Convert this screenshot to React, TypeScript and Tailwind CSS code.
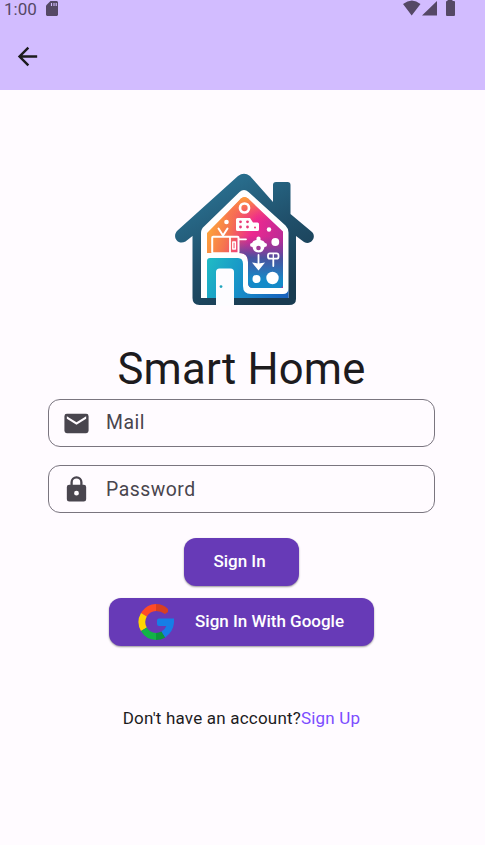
function HouseLogo() {
  return (
    <svg width="150" height="142" viewBox="170 168 150 142" fill="none" aria-label="Smart Home logo">
      <defs>
        <linearGradient id="navy" x1="200" y1="180" x2="265" y2="300" gradientUnits="userSpaceOnUse">
          <stop stopColor="#2b7596" />
          <stop offset=".55" stopColor="#20506b" />
          <stop offset="1" stopColor="#193b51" />
        </linearGradient>
        <linearGradient id="warm" x1="208" y1="218" x2="284" y2="243" gradientUnits="userSpaceOnUse">
          <stop stopColor="#ffad38" />
          <stop offset=".3" stopColor="#f5744f" />
          <stop offset=".58" stopColor="#ed2890" />
          <stop offset="1" stopColor="#b72c96" />
        </linearGradient>
        <linearGradient id="peak" x1="244" y1="195" x2="244" y2="222" gradientUnits="userSpaceOnUse">
          <stop stopColor="#ffb02f" />
          <stop offset="1" stopColor="#f83d72" stopOpacity="0" />
        </linearGradient>
        <linearGradient id="cool" x1="262" y1="236" x2="260" y2="280" gradientUnits="userSpaceOnUse">
          <stop stopColor="#7838a1" stopOpacity="0" />
          <stop offset=".5" stopColor="#49539f" />
          <stop offset="1" stopColor="#148ac8" />
        </linearGradient>
        <linearGradient id="teal" x1="207" y1="260" x2="288" y2="297" gradientUnits="userSpaceOnUse">
          <stop stopColor="#20bbc5" />
          <stop offset=".5" stopColor="#168bc8" />
          <stop offset="1" stopColor="#1760bd" />
        </linearGradient>
      </defs>
      <path d="M273 202V185q0-3 3-3h11.500q3 0 3 3v29l21.500 18c5 5-1 14-8 10l-8-6v63q0 6-7 6h-89.500q-7 0-7-7v-62l-7 5.500c-8 4-14-5-8-11L238 176q6-4.500 12 0Z" fill="url(#navy)" />
      <path d="M201 298v-65q0-4 3-6.500l35.500-34.500q4.500-4 9 0l37 33.500q3 3 3 7V298Z" fill="#fff" />
      <path d="M207 253v-20l34-34.500q3.500-3 7 0l35 33V288h-30q-5 0-5-5v-21q0-9-9-9Z" fill="url(#warm)" />
      <path d="M225 216l16-17.500q3.500-3 7 0l20 19v8h-43Z" fill="url(#peak)" />
      <path d="M239 236h44v49q0 3-3 3h-27q-5 0-5-5v-21q0-9-9-9Z" fill="url(#cool)" />
      <path d="M207 298v-37q0-3 3-3h28q5 0 5 6v22q0 8 8 8h32q5 0 5.500-5v9Z" fill="url(#teal)" />
      <path d="M216 306v-34q0-3.500 3.500-3.500h11q3.500 0 3.500 3.500v34Z" fill="#fdfcff" />
      <circle cx="221" cy="286.600" r="1.400" fill="#20a5bd" />
      <g stroke="#fff" strokeLinecap="round" strokeLinejoin="round">
        <circle cx="244.500" cy="208" r="4.500" strokeWidth="2.700" />
        <path d="m218.500 228.500 4.500 7 4.500-7" strokeWidth="2" />
        <rect x="212.200" y="236.700" width="26.300" height="16.600" rx="1" strokeWidth="2" />
        <path d="M230 237v16M239 239.300h7" strokeWidth="1.800" />
        <rect x="232.800" y="242" width="2.500" height="7" strokeWidth="1.500" />
        <path d="M258.500 255v10M273.300 259v7" strokeWidth="1.800" />
        <rect x="268" y="253.300" width="10.500" height="5.400" rx="2" strokeWidth="1.800" />
        <path d="M273.300 254v4" strokeWidth="1.300" />
      </g>
      <g fill="#fff">
        <circle cx="226.500" cy="222" r="2.300" />
        <path d="M236 219.500q0-1.500 1.500-1.500H250l3 4.500h4.500q1.500 0 1.500 1.500v5.500q0 1.500-1.500 1.500H237.500q-1.500 0-1.500-1.500Z" />
        <circle cx="269" cy="229.500" r="2.200" />
        <circle cx="275.300" cy="242" r="3.900" />
        <path d="M256.500 240v-2q0-1.500 2-1.500t2 1.500v2q3.500.5 4.500 3 2 0 2 2t-2.500 2q-1 5.500-6 5.500t-6-5.500q-2.500 0-2.500-2t2-2q1-2.500 4.500-3Z" />
        <path d="m252 262.500 6.500 8 6.500-8-6.500 1Z" />
        <circle cx="256.500" cy="279" r="4" />
        <circle cx="272.500" cy="278" r="6.200" />
      </g>
      <g fill="#e93b78">
        <circle cx="240.500" cy="221.800" r="1.400" /><circle cx="247.500" cy="221.800" r="1.400" />
        <circle cx="240.500" cy="227" r="1.400" /><circle cx="247.500" cy="227" r="1.400" />
        <circle cx="255" cy="227.500" r="1" /><circle cx="258.500" cy="248" r="2.300" fill="#a33a98" />
      </g>
    </svg>
  );
}

function GoogleLogo() {
  return (
    <svg width="36" height="36" viewBox="0 0 36 36" fill="none">
      <path d="M3.900 7.600A18 18 0 0 1 18 0v7a11 11 0 0 0-9.200 5.500L3 9.200Z" fill="#ff4b26" />
      <path d="M18 0q7 0 12 5v3l-3 2q-4-3-9-3Z" fill="#d93f21" />
      <path d="M3 9 8.800 12.500a11 11 0 0 0 0 11L3 27a18 18 0 0 1 0-18Z" fill="#ffd500" />
      <path d="m3 27 5.800-3.500A11 11 0 0 0 18 29v7a18 18 0 0 1-15-9Z" fill="#12b347" />
      <path d="M18 29q3 0 5.500-1.400l3.800 5.800Q23 36 18 36Z" fill="#0d963b" />
      <path d="M21 14.500h15q1 12-8.700 18.900l-3.800-5.800q3.500-2 4.800-5.600H21q-2 0-2-2v-3.500q0-2 2-2Z" fill="#167ee6" />
    </svg>
  );
}

export default function App() {
  return (
    <div className="h-[845px] w-[485px] overflow-hidden bg-[#fffbff] font-[Roboto,sans-serif] text-[#1d1b1e]">
      <header className="h-[90px] bg-[#d2bcff]">
        <div className="flex h-[22px] items-start pr-[29px] pl-1 text-[#554865]">
          <span className="w-[42px] text-[17px] leading-[19px]">1:00</span>
          <svg width="12" height="15" viewBox="0 0 12 15" className="mt-px">
            <path d="M4.500 0H11l1 1v13l-1 1H1l-1-1V4.500Z" fill="currentColor" />
            <path d="M5.500 2v3M8 2v3M10.200 2v3" stroke="#d2bcff" strokeWidth="1.100" />
          </svg>
          <svg className="ml-auto" width="54" height="18" viewBox="402 0 54 18" fill="currentColor">
            <path d="M403 4q9-7 17.500 0l-8.800 11.500ZM422 15.500h15V1ZM447.500 0h5v1h1.500q1 0 1 1v13q0 1-1 1h-7q-1 0-1-1V2q0-1 1-1h.5Z" />
          </svg>
        </div>
        <button className="mt-5 ml-[13px] block size-[29px]" aria-label="Back">
          <svg width="29" height="29" viewBox="0 0 24 24" fill="#1d1b1e"><path d="M20 10.900v2.100H7.830l5.590 5.590L12 20l-8-8 8-8 1.420 1.410-5.580 5.490Z" /></svg>
        </button>
      </header>

      <main className="flex flex-col items-center pt-[78px] pr-[2px]">
        <div className="pl-[6px]"><HouseLogo /></div>
        <h1 className="mt-[34px] h-[55px] text-[43.600px] leading-[52px] tracking-[.2px] whitespace-nowrap">Smart Home</h1>
        <div className="flex w-[387px] flex-col gap-[18px] text-[19.400px] tracking-[.5px] text-[#49454e]">
          <label className="flex h-12 items-center rounded-xl border border-[#7a757f]">
            <svg className="ml-[13px]" width="29" height="29" viewBox="0 0 24 24" fill="currentColor"><path d="M20 4H4a2 2 0 0 0-2 2v12a2 2 0 0 0 2 2h16a2 2 0 0 0 2-2V6a2 2 0 0 0-2-2Zm0 4-8 5-8-5V6l8 5 8-5Z" /></svg>
            <span className="ml-[15px]">Mail</span>
          </label>
          <label className="flex h-12 items-center rounded-xl border border-[#7a757f]">
            <svg className="ml-[13px]" width="29" height="29" viewBox="0 0 24 24" fill="currentColor"><path d="M18 8h-1V6A5 5 0 0 0 7 6v2H6a2 2 0 0 0-2 2v10a2 2 0 0 0 2 2h12a2 2 0 0 0 2-2V10a2 2 0 0 0-2-2Zm-6 9a2 2 0 1 1 0-4 2 2 0 0 1 0 4Zm3.100-9H8.900V6a3.100 3.100 0 0 1 6.200 0Z" /></svg>
            <span className="ml-[15px] pt-px">Password</span>
          </label>
        </div>
        <button className="mt-[25px] h-12 w-[115px] rounded-xl bg-[#673ab7] text-[17px] font-medium text-white shadow-[0_1px_2px_#0006]"><span className="mr-[4px]">Sign In</span></button>
        <button className="mt-3 flex h-12 w-[265px] items-center rounded-xl bg-[#673ab7] pl-[29px] text-[17px] font-medium whitespace-nowrap text-white shadow-[0_1px_2px_#0006]">
          <GoogleLogo />
          <span className="ml-[21px]">Sign In With Google</span>
        </button>
        <p className="mt-[62px] text-[17px] leading-5 tracking-[.2px] whitespace-nowrap">Don't have an account?<a className="text-[#7c4dff]">Sign Up</a></p>
      </main>
    </div>
  );
}
